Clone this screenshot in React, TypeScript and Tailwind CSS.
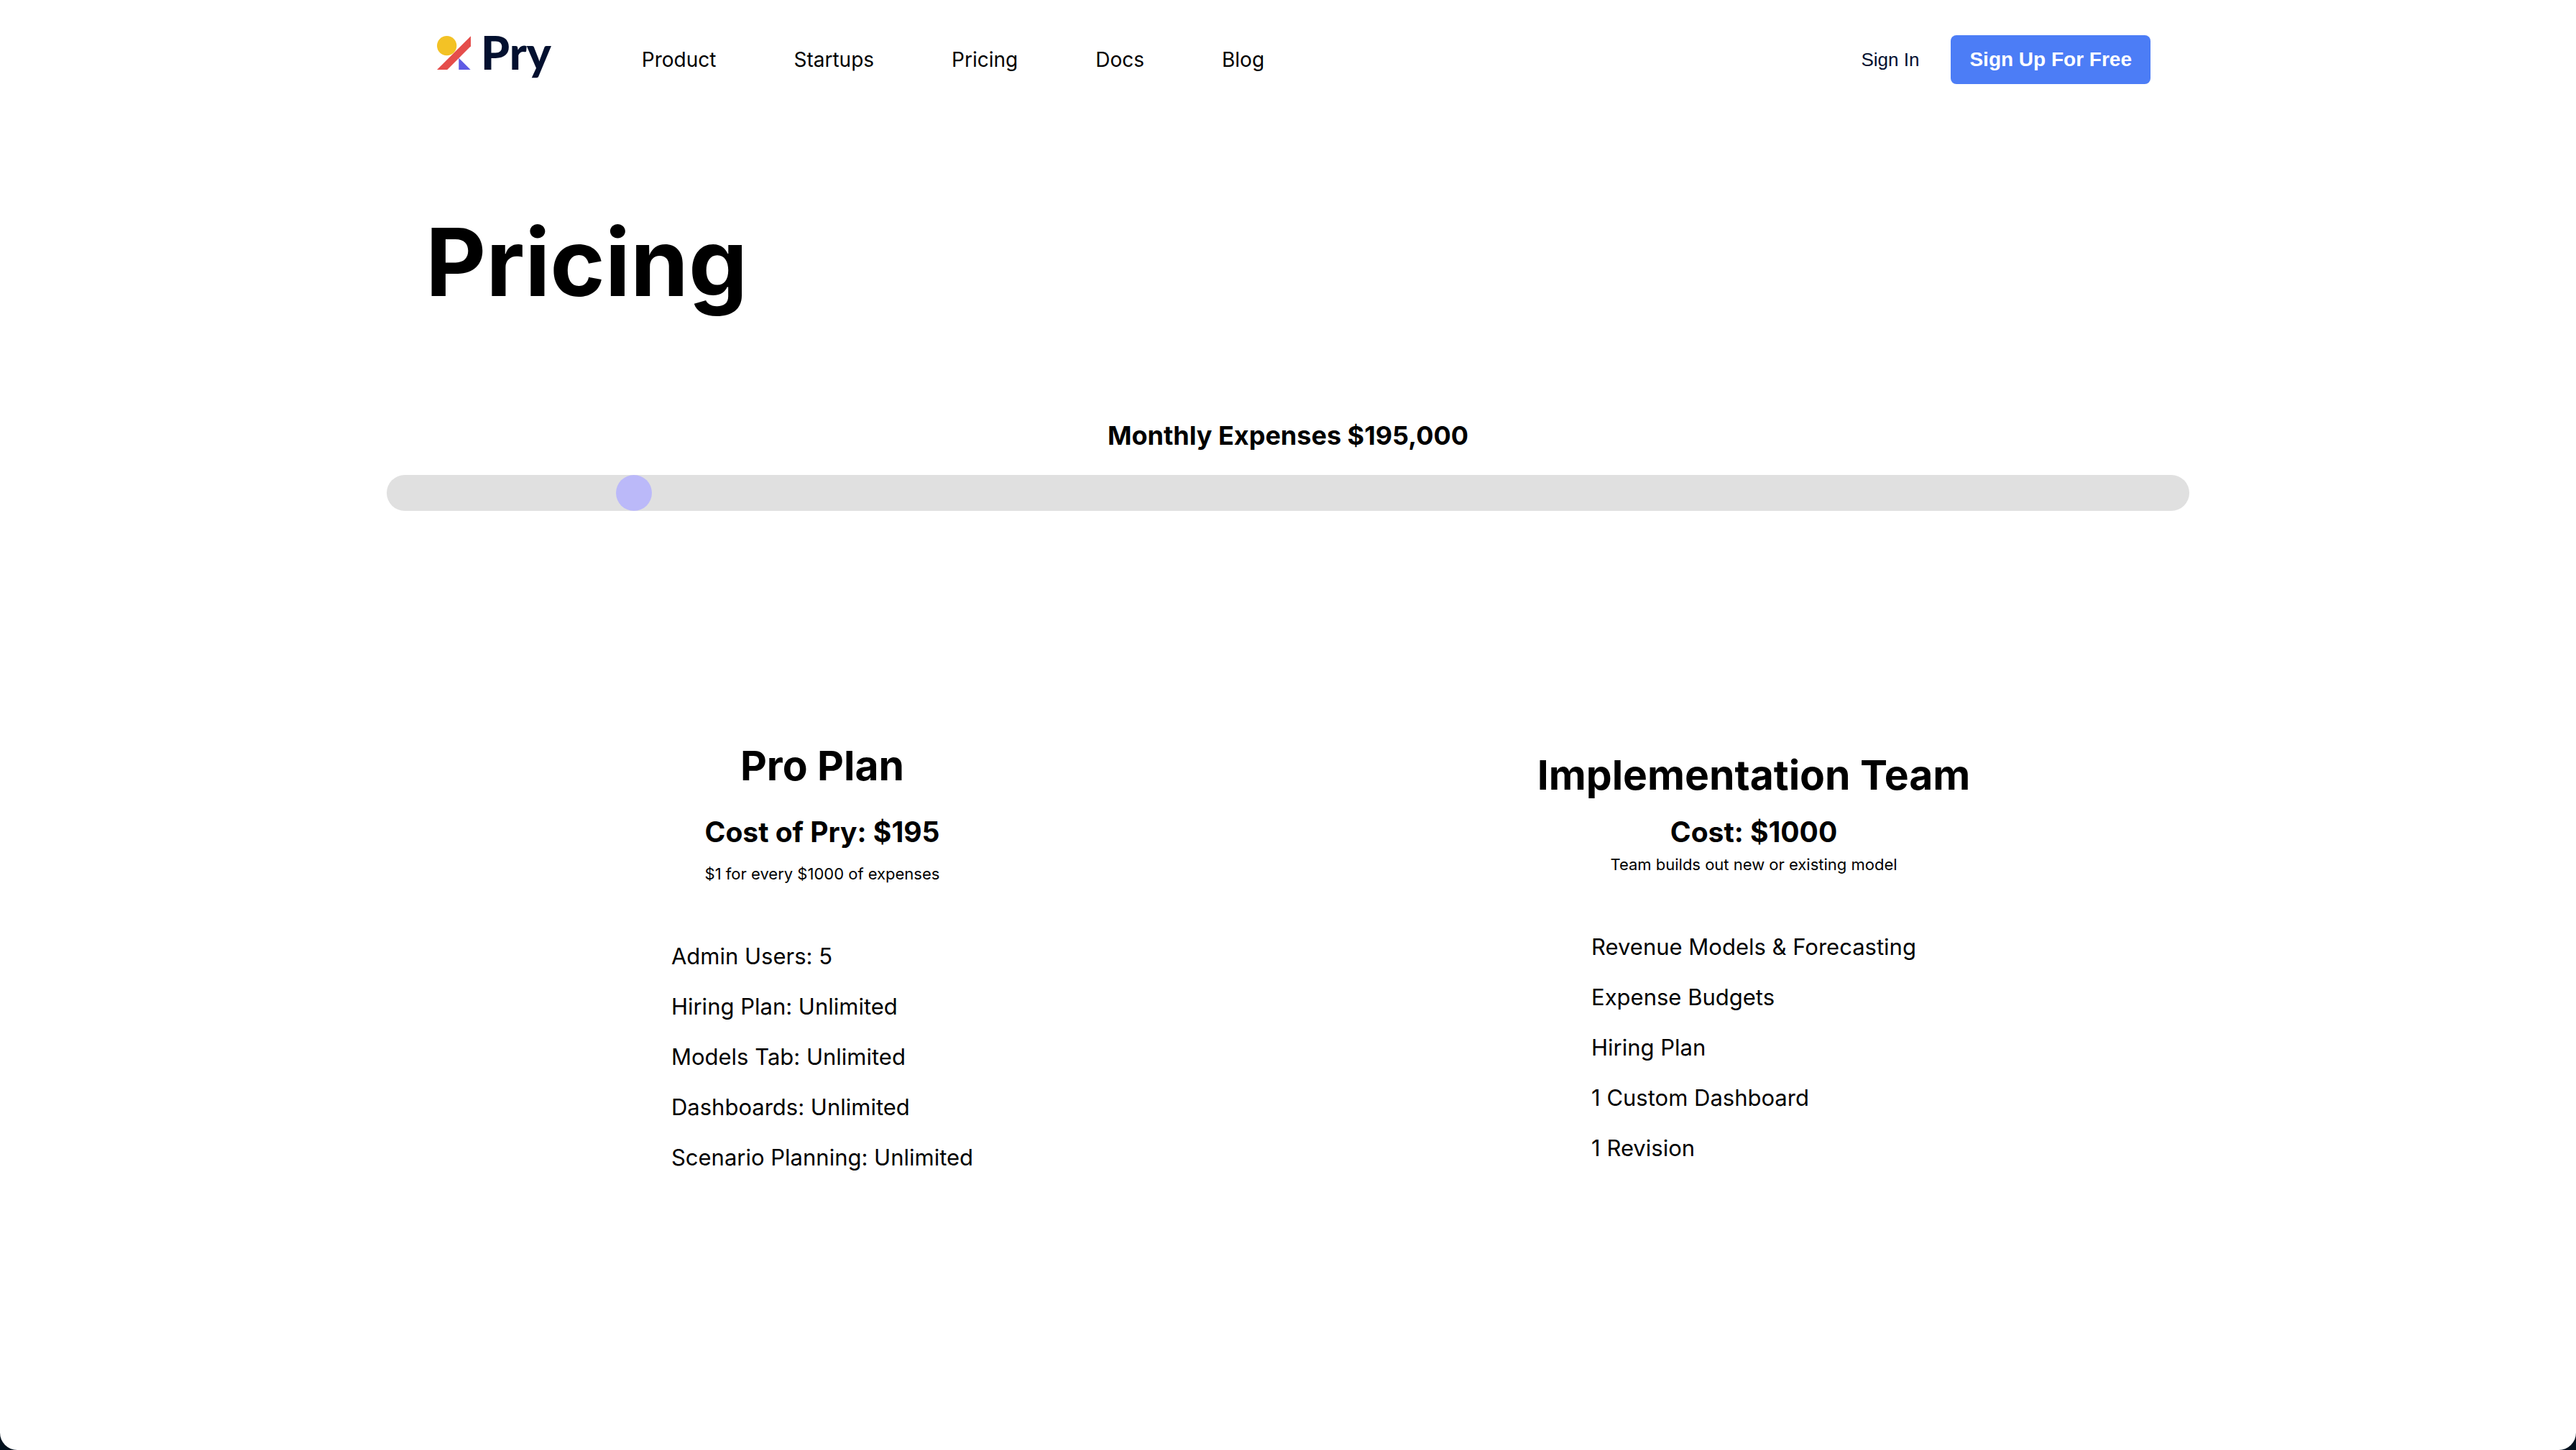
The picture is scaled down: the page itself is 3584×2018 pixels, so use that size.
import { useState } from "react";

const navItems = ["Product", "Startups", "Pricing", "Docs", "Blog"];

const proFeatures = [
  "Admin Users: 5",
  "Hiring Plan: Unlimited",
  "Models Tab: Unlimited",
  "Dashboards: Unlimited",
  "Scenario Planning: Unlimited",
];

const teamFeatures = [
  "Revenue Models & Forecasting",
  "Expense Budgets",
  "Hiring Plan",
  "1 Custom Dashboard",
  "1 Revision",
];

function Logo() {
  return (
    <a
      href="#home"
      aria-label="Pry home"
      className="flex h-12 items-baseline gap-[14px] self-start font-['Lato',sans-serif] text-[64px] leading-[48px] font-black text-[#03102f]"
    >
      <svg viewBox="0 0 141 141" className="h-[47px] w-[47px]" aria-hidden="true">
        <circle cx="41" cy="41" r="41" fill="#f3c225" />
        <path d="M0 141H43L141 43V1Z" fill="#e54d4b" />
        <path d="M91 92V141H140Z" fill="#5f5be4" />
      </svg>
      <span>Pry</span>
    </a>
  );
}

function Header() {
  return (
    <header className="mx-auto flex w-full max-w-[2400px] items-center py-[49px] pl-4">
      <Logo />
      <nav aria-label="Main" className="ml-[126px] flex gap-[108px] text-[28px] leading-10">
        {navItems.map((item) => (
          <a key={item} href={`#${item.toLowerCase()}`}>
            {item}
          </a>
        ))}
      </nav>
      <div className="ml-auto flex items-center gap-11 font-['Liberation_Sans',Arial,sans-serif]">
        <a href="#sign-in" className="text-[26px] leading-10 text-[#03102f]">
          Sign In
        </a>
        <button
          type="button"
          className="h-[68px] rounded-lg bg-[#4c7df6] px-[26px] text-[28px] leading-10 font-bold text-white"
        >
          Sign Up For Free
        </button>
      </div>
    </header>
  );
}

function FeatureList({ items }: { items: string[] }) {
  return (
    <ul className="mt-[82px] flex flex-col gap-8 text-[31px] leading-[38px]">
      {items.map((item) => (
        <li key={item}>{item}</li>
      ))}
    </ul>
  );
}

export default function App() {
  const [expenses, setExpenses] = useState(195000);

  return (
    <div className="min-h-screen bg-[#04121f]">
      <div className="flex min-h-screen flex-col rounded-b-3xl bg-white font-['Inter',sans-serif] text-black">
        <Header />
        <main className="flex flex-col items-center">
          <h1 className="w-full max-w-[2400px] pt-[119px] text-[130px] leading-[160px] font-bold">
            Pricing
          </h1>

          <label
            htmlFor="expenses"
            className="mt-[137px] text-[36px] leading-[48px] font-bold"
          >
            Monthly Expenses ${expenses.toLocaleString("en-US")}
          </label>
          <input
            id="expenses"
            type="range"
            min={0}
            max={1500000}
            step={5000}
            value={expenses}
            onChange={(event) => setExpenses(Number(event.target.value))}
            className="mt-[31px] h-[50px] w-[70%] cursor-pointer appearance-none rounded-full bg-[#e0e0e0] outline-none [&::-webkit-slider-thumb]:h-[50px] [&::-webkit-slider-thumb]:w-[50px] [&::-webkit-slider-thumb]:appearance-none [&::-webkit-slider-thumb]:rounded-full [&::-webkit-slider-thumb]:bg-[#bbb9f9]"
          />

          <div className="mt-[319px] grid w-full max-w-[2592px] grid-cols-2">
            <section className="flex flex-col items-center">
              <h2 className="text-[57px] leading-[72px] font-bold">Pro Plan</h2>
              <h3 className="mt-8 text-[39px] leading-[48px] font-bold">
                Cost of Pry: ${Math.round(expenses / 1000)}
              </h3>
              <p className="mt-5 text-[22px] leading-7">$1 for every $1000 of expenses</p>
              <FeatureList items={proFeatures} />
            </section>
            <section className="flex flex-col items-center pt-[13px]">
              <h2 className="text-[57px] leading-[72px] font-bold">Implementation Team</h2>
              <h3 className="mt-[19px] text-[39px] leading-[48px] font-bold">Cost: $1000</h3>
              <p className="mt-[7px] text-[22px] leading-7">
                Team builds out new or existing model
              </p>
              <FeatureList items={teamFeatures} />
            </section>
          </div>
        </main>
      </div>
    </div>
  );
}
